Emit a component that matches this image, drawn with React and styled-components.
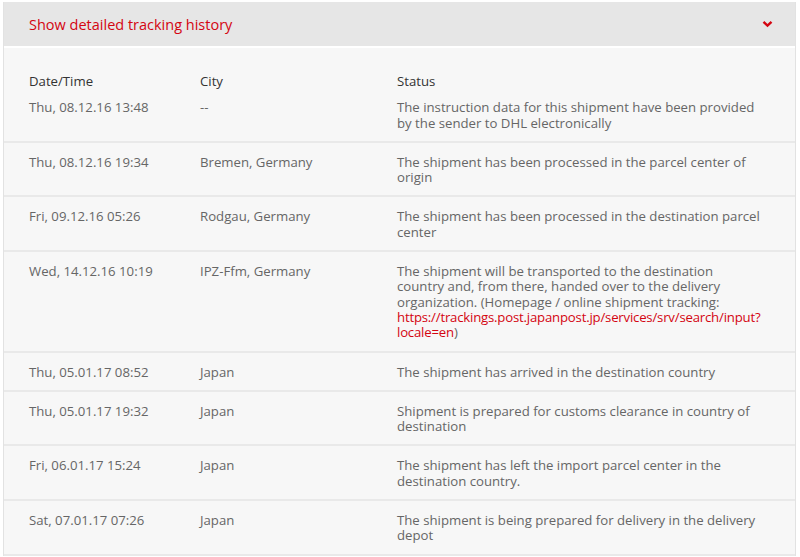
import React from "react";
import styled, { createGlobalStyle } from "styled-components";

const GlobalStyle = createGlobalStyle`
  body {
    margin: 0;
    background: #ffffff;
    font-family: "Open Sans", "Noto Sans", Arial, sans-serif;
  }
`;

const Page = styled.div`
  padding: 2px 4px 0 3px;
`;

const Panel = styled.div`
  border-left: 1px solid #e2e2e2;
  border-right: 1px solid #e2e2e2;
`;

const Toggle = styled.div`
  display: flex;
  align-items: center;
  justify-content: space-between;
  height: 44px;
  padding: 0 22px 0 25px;
  background-color: #e6e6e6;
  color: #d40511;
  font-size: 14.5px;
  cursor: pointer;
`;

const Body = styled.div`
  margin-top: 2px;
  background-color: #f7f7f7;
  padding-top: 26px;
`;

const HeadRow = styled.div`
  display: grid;
  grid-template-columns: 171px 197px 365px;
  padding: 0 22px 9px 25px;
  font-size: 13.2px;
  line-height: 15.3px;
  color: #333333;
`;

const Row = styled(HeadRow)`
  padding: ${(p) => (p.$first ? "2px" : "12px")} 22px 10px 25px;
  border-bottom: 2px solid #e9e9e9;
  color: #666666;
`;

const Cell = styled.div``;

const Link = styled.a`
  color: #d40511;
  text-decoration: none;
  letter-spacing: -0.2px;
`;

const Chevron = () => (
  <svg width="11" height="8" viewBox="0 0 11 8">
    <path d="M1.5 1.8 L5.5 5.6 L9.5 1.8" fill="none" stroke="#d40511" strokeWidth="2.4" />
  </svg>
);

const events = [
  ["Thu, 08.12.16 13:48", "--", "The instruction data for this shipment have been provided by the sender to DHL electronically"],
  ["Thu, 08.12.16 19:34", "Bremen, Germany", "The shipment has been processed in the parcel center of origin"],
  ["Fri, 09.12.16 05:26", "Rodgau, Germany", "The shipment has been processed in the destination parcel center"],
  ["Wed, 14.12.16 10:19", "IPZ-Ffm, Germany", "link"],
  ["Thu, 05.01.17 08:52", "Japan", "The shipment has arrived in the destination country"],
  ["Thu, 05.01.17 19:32", "Japan", "Shipment is prepared for customs clearance in country of destination"],
  ["Fri, 06.01.17 15:24", "Japan", "The shipment has left the import parcel center in the destination country."],
  ["Sat, 07.01.17 07:26", "Japan", "The shipment is being prepared for delivery in the delivery depot"],
];

export default function App() {
  return (
    <Page>
      <GlobalStyle />
      <Panel>
        <Toggle>
          <span>Show detailed tracking history</span>
          <Chevron />
        </Toggle>
        <Body>
          <HeadRow>
            <Cell>Date/Time</Cell>
            <Cell>City</Cell>
            <Cell>Status</Cell>
          </HeadRow>
          {events.map(([date, city, status], i) => (
            <Row key={i} $first={i === 0}>
              <Cell>{date}</Cell>
              <Cell>{city}</Cell>
              <Cell>
                {status === "link" ? (
                  <>
                    The shipment will be transported to the destination country and, from there, handed over to the delivery organization. (Homepage / online shipment tracking:{" "}
                    <Link href="#">https://trackings.post.japanpost.jp/services/srv/search/input?locale=en</Link>)
                  </>
                ) : (
                  status
                )}
              </Cell>
            </Row>
          ))}
        </Body>
      </Panel>
    </Page>
  );
}
